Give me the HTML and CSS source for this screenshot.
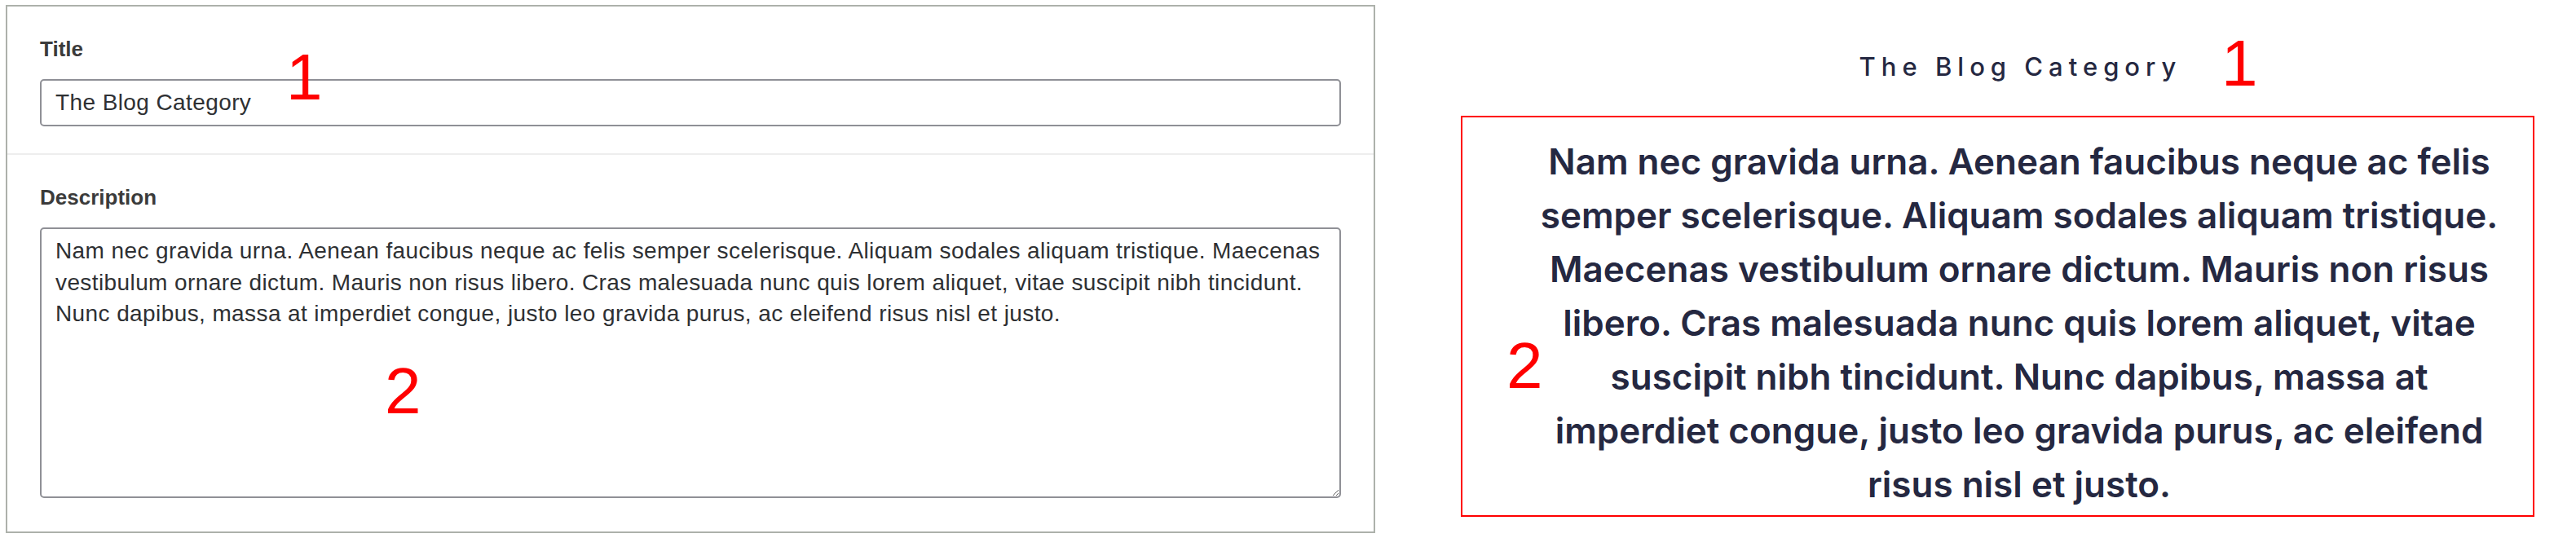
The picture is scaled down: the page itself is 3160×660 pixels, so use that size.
FILE: index.html
```html
<!DOCTYPE html>
<html lang="en">
<head>
<meta charset="utf-8">
<title>Blog category – edit and preview</title>
<link rel="stylesheet" href="styles.css">
</head>
<body>
<div class="page">
  <form class="edit-panel">
    <div class="field-group">
      <label class="field-label" for="title">Title</label>
      <input class="field-input" id="title" type="text" value="The Blog Category">
    </div>
    <div class="field-group field-group--last">
      <label class="field-label" for="description">Description</label>
      <textarea class="field-textarea" id="description">Nam nec gravida urna. Aenean faucibus neque ac felis semper scelerisque. Aliquam sodales aliquam tristique. Maecenas vestibulum ornare dictum. Mauris non risus libero. Cras malesuada nunc quis lorem aliquet, vitae suscipit nibh tincidunt. Nunc dapibus, massa at imperdiet congue, justo leo gravida purus, ac eleifend risus nisl et justo.</textarea>
    </div>
  </form>

  <section class="preview">
    <h1 class="preview-title">The Blog Category</h1>
    <div class="preview-body">
      <p class="preview-text">Nam nec gravida urna. Aenean faucibus neque ac felis semper scelerisque. Aliquam sodales aliquam tristique. Maecenas vestibulum ornare dictum. Mauris non risus libero. Cras malesuada nunc quis lorem aliquet, vitae suscipit nibh tincidunt. Nunc dapibus, massa at imperdiet congue, justo leo gravida purus, ac eleifend risus nisl et justo.</p>
    </div>
  </section>

  <span class="marker marker--edit-title">1</span>
  <span class="marker marker--edit-desc">2</span>
  <span class="marker marker--preview-title">1</span>
  <span class="marker marker--preview-desc">2</span>
</div>
</body>
</html>
```

FILE: styles.css
```css
html, body {
  margin: 0;
  padding: 0;
  background: #ffffff;
}

.page {
  position: relative;
  display: flex;
  align-items: flex-start;
  width: 3160px;
  height: 660px;
  padding: 6px 0 0 7px;
  box-sizing: border-box;
  font-family: "Liberation Sans", Arial, sans-serif;
}

/* ---------- left: edit form ---------- */
.edit-panel {
  width: 1680px;
  height: 648px;
  box-sizing: border-box;
  border: 2px solid #adb1ab;
  margin: 0;
  display: flex;
  flex-direction: column;
}

.field-group {
  display: flex;
  flex-direction: column;
  padding: 37px 40px 33px 40px;
  border-bottom: 2px solid #eeeeee;
}

.field-group--last {
  border-bottom: none;
  padding-bottom: 39px;
}

.field-label {
  font-size: 26px;
  line-height: 30px;
  font-weight: 700;
  color: #3b3b3b;
  margin-bottom: 22px;
}

.field-input,
.field-textarea {
  box-sizing: border-box;
  width: 100%;
  border: 2px solid #8f9096;
  border-radius: 5px;
  font-family: "Liberation Sans", Arial, sans-serif;
  font-size: 28px;
  letter-spacing: 0.4px;
  color: #2e3033;
  background: #ffffff;
  margin: 0;
  outline: none;
}

.field-input {
  height: 58px;
  padding: 0 17px;
}

.field-textarea {
  height: 332px;
  padding: 8px 6px 8px 17px;
  line-height: 38.5px;
  resize: vertical;
  overflow: hidden;
}

/* ---------- right: preview ---------- */
.preview {
  flex: 1;
  display: flex;
  flex-direction: column;
  padding: 57px 51px 0 105px;
  font-family: Inter, Lato, sans-serif;
  color: #252841;
}

.preview-title {
  margin: 0;
  padding-left: 56px;
  text-align: center;
  font-size: 31px;
  line-height: 38px;
  font-weight: 500;
  letter-spacing: 7px;
}

.preview-body {
  margin-top: 41px;
  border: 2px solid #ff0000;
  padding: 21px 32px 4px 85px;
  height: 492px;
  box-sizing: border-box;
}

.preview-text {
  margin: 0;
  text-align: center;
  font-size: 44px;
  line-height: 66px;
  font-weight: 600;
}

/* ---------- red annotation markers ---------- */
.marker {
  position: absolute;
  font-family: "Liberation Sans", Arial, sans-serif;
  font-size: 80px;
  line-height: 80px;
  color: #ff0000;
}

.marker--edit-title { left: 351px; top: 55px; }
.marker--edit-desc { left: 472px; top: 440px; }
.marker--preview-title { left: 2725px; top: 38px; }
.marker--preview-desc { left: 1848px; top: 409px; }
```
